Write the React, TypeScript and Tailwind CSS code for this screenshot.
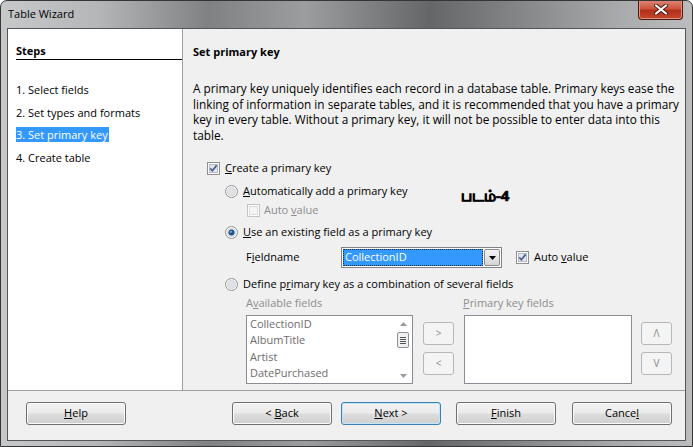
import clsx from "clsx";
import type { ReactNode } from "react";

const Check = ({ checked = false, disabled = false }: { checked?: boolean; disabled?: boolean }) => (
  <svg width="13" height="13" viewBox="0 0 13 13" className="shrink-0">
    <rect x="0.5" y="0.5" width="12" height="12" fill="#fff" stroke={disabled ? "#c2c4c6" : "#8e8f8f"} />
    <rect x="2.5" y="2.5" width="8" height="8" fill={disabled ? "#f4f4f4" : "#e2e6ee"} stroke={disabled ? "#dcdcdc" : "#b5bbc6"} />
    {checked && (
      <path d="M3.3 6.4 L5.4 8.7 L9.6 3.4" fill="none" stroke="#4a5e8f" strokeWidth="1.7" />
    )}
  </svg>
);

const Radio = ({ checked = false }: { checked?: boolean }) => (
  <svg width="13" height="13" viewBox="0 0 13 13" className="shrink-0">
    <circle cx="6.5" cy="6.5" r="6" fill="#fff" stroke="#8e8f8f" />
    <circle cx="6.5" cy="6.5" r="4.2" fill="#dfe1e5" stroke="#c4c7cc" strokeWidth="0.6" />
    {checked && (
      <>
        <circle cx="6.5" cy="6.5" r="3" fill="#1e5590" />
        <circle cx="5.8" cy="5.8" r="1.1" fill="#7fb2e0" />
      </>
    )}
  </svg>
);

const WinButton = ({ children, primary = false }: { children: ReactNode; primary?: boolean }) => (
  <div
    className={clsx(
      "flex h-[23px] w-[100px] items-center justify-center rounded-[3px] border text-[11px] text-black",
      "bg-[linear-gradient(180deg,#f2f2f2_0%,#ebebeb_48%,#dddddd_52%,#cfcfcf_100%)]",
      primary
        ? "border-[#3c7fb1] shadow-[inset_0_0_0_1px_#c4e5f6]"
        : "border-[#707070] shadow-[inset_0_0_0_1px_#fbfbfb]"
    )}
  >
    {children}
  </div>
);

const SmallButton = ({ children }: { children: ReactNode }) => (
  <div className="flex h-[23px] w-[31px] items-center justify-center rounded-[3px] border border-[#b4b8bb] bg-[#f4f4f4] text-[10px] text-[#8a8a8a]">
    {children}
  </div>
);

const fields = ["CollectionID", "AlbumTitle", "Artist", "DatePurchased"];

export default function App() {
  return (
    <div className="font-['Open_Sans',sans-serif] text-[11px] text-black">
      <div className="flex h-[447px] w-[693px] flex-col overflow-hidden rounded-t-[7px] border border-[#353535] bg-[linear-gradient(90deg,#c6c8ca_0%,#b4b6b8_14%,#7f8183_30%,#9c9d9e_44%,#656668_62%,#7d7e80_72%,#a6a7a8_88%,#bbbcbd_100%)]">
        {/* title bar */}
        <div className="flex h-[27px] items-start justify-between">
          <div className="pl-[7px] pt-[5px] text-[11px] text-black">Table Wizard</div>
          <div className="-mt-px mr-[9px] flex h-[20px] w-[45px] items-center justify-center rounded-b-[4px] border border-t-0 border-[#4e1a10] bg-[linear-gradient(180deg,#dc8a78_0%,#cc5540_45%,#b2301a_55%,#c4472c_100%)] shadow-[inset_0_0_0_1px_#dd9482]">
            <svg width="14" height="11" viewBox="0 0 14 11">
              <path d="M2 1.5 L12 9.5 M12 1.5 L2 9.5" stroke="#4a1a10" strokeWidth="4" strokeLinecap="round" />
              <path d="M2 1.5 L12 9.5 M12 1.5 L2 9.5" stroke="#ffffff" strokeWidth="2.2" strokeLinecap="round" />
            </svg>
          </div>
        </div>

        {/* client area */}
        <div className="mx-[6px] mb-[5px] flex h-[413px] flex-col border border-[#555657] bg-[#f0f0f0]">
          <div className="flex h-[361px]">
            {/* steps */}
            <div className="w-[175px] border-r border-[#a0a0a0] bg-white pl-[8px] pt-[15px]">
              <div className="border-b border-black pb-px font-bold leading-[14px]">Steps</div>
              <div className="mt-[22px] flex flex-col gap-[7.7px]">
                <div className="h-[15px] leading-[15px]">1. Select fields</div>
                <div className="h-[15px] leading-[15px]">2. Set types and formats</div>
                <div className="h-[15px] w-[93px] bg-[#3399ff] leading-[15px] text-white">3. Set primary key</div>
                <div className="h-[15px] leading-[15px]">4. Create table</div>
              </div>
            </div>

            {/* page */}
            <div className="relative flex-1 pl-[10px] pt-[15px]">
              <div className="font-bold leading-[16px]">Set primary key</div>
              <p className="mt-[21px] whitespace-nowrap text-[11.8px] leading-[15.5px]">
                A primary key uniquely identifies each record in a database table. Primary keys ease the
                <br />
                linking of information in separate tables, and it is recommended that you have a primary
                <br />
                key in every table. Without a primary key, it will not be possible to enter data into this
                <br />
                table.
              </p>

              <div className="mt-[17px] flex h-[16px] items-center gap-[5px] pl-[14px]">
                <Check checked />
                <span>
                  <u>C</u>reate a primary key
                </span>
              </div>
              <div className="mt-[7px] flex h-[16px] items-center gap-[5px] pl-[32px]">
                <Radio />
                <span>
                  <u>A</u>utomatically add a primary key
                </span>
              </div>
              <div className="mt-[3px] flex h-[16px] items-center gap-[4px] pl-[54px] text-[#8d8d8d]">
                <Check disabled />
                <span>
                  Auto <u>v</u>alue
                </span>
              </div>
              <div className="mt-[6px] flex h-[16px] items-center gap-[5px] pl-[32px]">
                <Radio checked />
                <span>
                  <u>U</u>se an existing field as a primary key
                </span>
              </div>
              <div className="mt-[7px] flex h-[21px] items-center pl-[53px]">
                <span className="w-[95px]">
                  F<u>i</u>eldname
                </span>
                <div className="flex h-[21px] w-[161px] border border-[#7f8288] bg-white p-px">
                  <div className="flex flex-1 items-center border border-dotted border-[#222] bg-[#3399ff] pl-px text-white">
                    CollectionID
                  </div>
                  <div className="ml-px flex w-[16px] items-center justify-center rounded-[2px] border border-[#8a8c90] bg-[linear-gradient(180deg,#f3f3f3_0%,#e6e6e6_50%,#d4d4d4_100%)]">
                    <svg width="7" height="4" viewBox="0 0 7 4">
                      <path d="M0 0 H7 L3.5 4 Z" fill="#000" />
                    </svg>
                  </div>
                </div>
                <div className="ml-[14px] flex items-center gap-[5px]">
                  <Check checked />
                  <span>
                    Auto <u>v</u>alue
                  </span>
                </div>
              </div>
              <div className="mt-[8px] flex h-[16px] items-center gap-[5px] pl-[32px]">
                <Radio />
                <span>
                  Define p<u>r</u>imary key as a combination of several fields
                </span>
              </div>
              <div className="mt-[3px] flex h-[16px] items-center pl-[53px] text-[#8d8d8d]">
                <span className="w-[217px]">
                  A<u>v</u>ailable fields
                </span>
                <span>
                  <u>P</u>rimary key fields
                </span>
              </div>
              <div className="mt-[4px] flex pl-[53px]">
                <div className="flex h-[69px] w-[167px] border border-[#8a8e94] bg-white">
                  <div className="flex-1 pl-[3px] text-[#6d6d6d]">
                    {fields.map((f) => (
                      <div key={f} className="leading-[16.3px]">
                        {f}
                      </div>
                    ))}
                  </div>
                  <div className="flex w-[16px] flex-col items-center pr-[2px]">
                    <div className="flex h-[16px] items-center">
                      <svg width="7" height="4" viewBox="0 0 7 4">
                        <path d="M0 4 H7 L3.5 0 Z" fill="#9a9a9a" />
                      </svg>
                    </div>
                    <div className="flex h-[16px] w-[12px] flex-col items-center justify-center gap-px rounded-[2px] border border-[#8c8f94] bg-[#eef0f2]">
                      <div className="h-px w-[6px] bg-[#555]" />
                      <div className="h-px w-[6px] bg-[#555]" />
                      <div className="h-px w-[6px] bg-[#555]" />
                      <div className="h-px w-[6px] bg-[#555]" />
                    </div>
                    <div className="flex-1" />
                    <div className="flex h-[14px] items-center">
                      <svg width="7" height="4" viewBox="0 0 7 4">
                        <path d="M0 0 H7 L3.5 4 Z" fill="#9a9a9a" />
                      </svg>
                    </div>
                  </div>
                </div>
                <div className="ml-[10px] flex flex-col gap-[7px] pt-[7px]">
                  <SmallButton>&gt;</SmallButton>
                  <SmallButton>&lt;</SmallButton>
                </div>
                <div className="ml-[10px] h-[69px] w-[168px] border border-[#8a8e94] bg-white" />
                <div className="ml-[9px] flex flex-col gap-[7px] pt-[7px]">
                  <SmallButton>Λ</SmallButton>
                  <SmallButton>V</SmallButton>
                </div>
              </div>

              <div className="absolute left-[278px] top-[158px] text-[15px] font-bold leading-[16px] [-webkit-text-stroke:0.7px_black]">
                படம்-4
              </div>
            </div>
          </div>

          {/* buttons */}
          <div className="flex flex-1 border-t border-[#a0a0a0] pl-[18px] pr-[13px] pt-[11px]">
            <WinButton>
              <span>
                <u>H</u>elp
              </span>
            </WinButton>
            <div className="ml-auto flex">
              <WinButton>
                <span>
                  &lt; <u>B</u>ack
                </span>
              </WinButton>
              <div className="ml-[9px]">
                <WinButton primary>
                  <span>
                    <u>N</u>ext &gt;
                  </span>
                </WinButton>
              </div>
              <div className="ml-[15px]">
                <WinButton>
                  <span>
                    <u>F</u>inish
                  </span>
                </WinButton>
              </div>
              <div className="ml-[16px]">
                <WinButton>
                  <span>
                    Cance<u>l</u>
                  </span>
                </WinButton>
              </div>
            </div>
          </div>
        </div>
      </div>
    </div>
  );
}
